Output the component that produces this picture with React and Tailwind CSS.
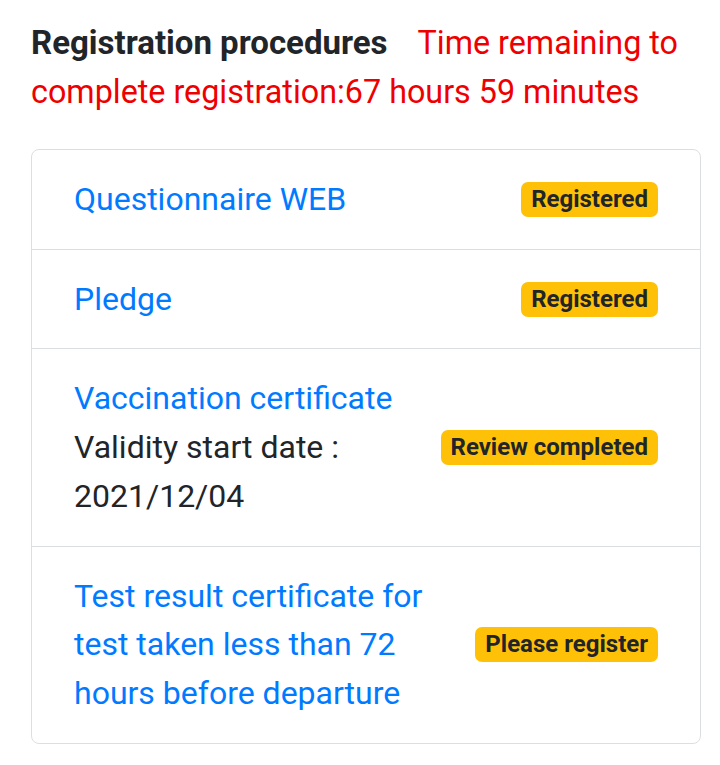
const rows = [
  { title: ["Questionnaire WEB"], badge: "Registered" },
  { title: ["Pledge"], badge: "Registered" },
  { title: ["Vaccination certificate"], sub: ["Validity start date :", "2021/12/04"], badge: "Review completed" },
  { title: ["Test result certificate for", "test taken less than 72", "hours before departure"], badge: "Please register" },
];

export default function App() {
  return (
    <div className="min-h-[765px] bg-white pl-[31px] pt-[19px] font-['Roboto',sans-serif] text-[32px] leading-[48.7px] text-[#212529]">
      <h5 className="w-[670px] text-[32.3px] leading-[48.5px]">
        <span className="text-[33px] font-bold">Registration procedures</span>
        <span className="ml-[30px] text-[#ee0000]">Time remaining to complete registration:67 hours 59 minutes</span>
      </h5>

      <ul className="mt-[33px] w-[670px] rounded-[8px] border border-[#dcdfe2]">
        {rows.map((row, i) => (
          <li key={i} className={"flex items-center justify-between px-[42px] py-[25px] " + (i > 0 ? "border-t border-[#dcdfe2]" : "")}>
            <div>
              {row.title.map((t) => (
                <div key={t} className="text-[#007bff]">{t}</div>
              ))}
              {row.sub && row.sub.map((t) => <div key={t}>{t}</div>)}
            </div>
            <span className="rounded-[7px] bg-[#ffc107] px-[10px] py-[6px] text-[24px] leading-[23px] font-bold text-[#212529]">
              {row.badge}
            </span>
          </li>
        ))}
      </ul>
    </div>
  );
}
